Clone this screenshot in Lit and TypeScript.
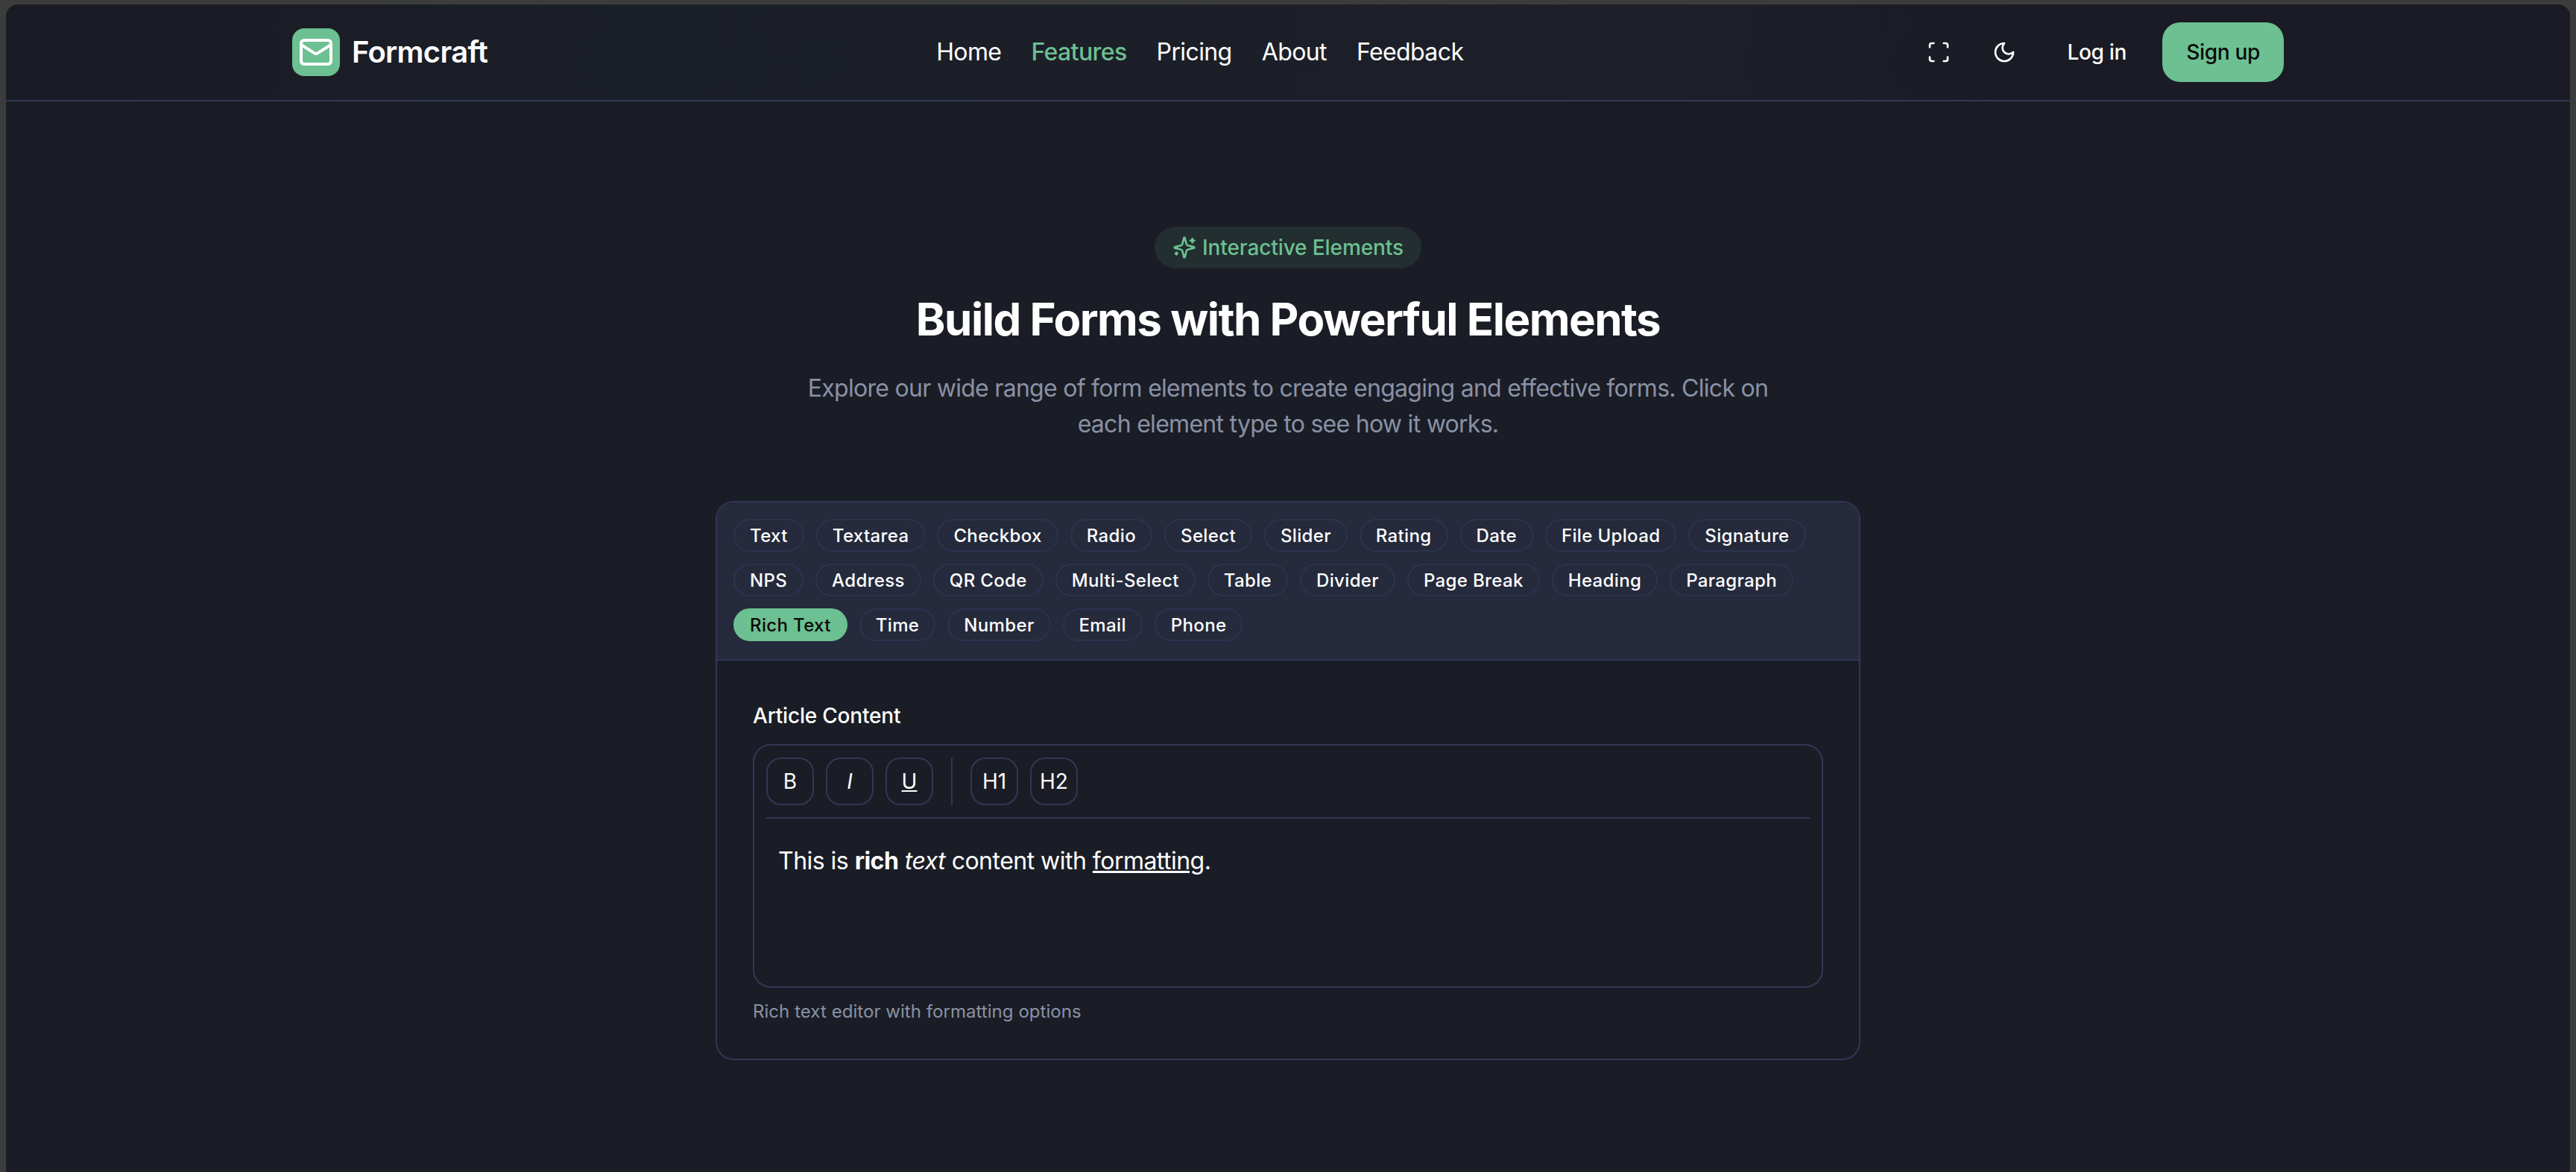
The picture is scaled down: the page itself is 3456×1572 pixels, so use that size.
import { LitElement, html, css, svg } from "lit";
import { customElement } from "lit/decorators.js";

const icon = (size: number, body: unknown, cls = "") => html`<svg class=${cls} width=${size} height=${size} viewBox="0 0 24 24" fill="none" stroke="currentColor" stroke-width="2" stroke-linecap="round" stroke-linejoin="round">${body}</svg>`;

const mail = svg`<rect x="2" y="4" width="20" height="16" rx="2"></rect><path d="m22 7-8.97 5.7a1.94 1.94 0 0 1-2.06 0L2 7"></path>`;
const scan = svg`<path d="M3 7V5a2 2 0 0 1 2-2h2"></path><path d="M17 3h2a2 2 0 0 1 2 2v2"></path><path d="M21 17v2a2 2 0 0 1-2 2h-2"></path><path d="M7 21H5a2 2 0 0 1-2-2v-2"></path>`;
const moon = svg`<path d="M12 3a6 6 0 0 0 9 9 9 9 0 1 1-9-9Z"></path>`;
const sparkles = svg`<path d="M9.937 15.5A2 2 0 0 0 8.5 14.063l-6.135-1.582a.5.5 0 0 1 0-.962L8.5 9.936A2 2 0 0 0 9.937 8.5l1.582-6.135a.5.5 0 0 1 .963 0L14.063 8.5A2 2 0 0 0 15.5 9.937l6.135 1.581a.5.5 0 0 1 0 .964L15.5 14.063a2 2 0 0 0-1.437 1.437l-1.582 6.135a.5.5 0 0 1-.963 0z"></path><path d="M20 3v4"></path><path d="M22 5h-4"></path><path d="M4 17v2"></path><path d="M5 18H3"></path>`;

const NAV = ["Home", "Features", "Pricing", "About", "Feedback"];
const CHIPS = ["Text","Textarea","Checkbox","Radio","Select","Slider","Rating","Date","File Upload","Signature","NPS","Address","QR Code","Multi-Select","Table","Divider","Page Break","Heading","Paragraph","Rich Text","Time","Number","Email","Phone"];

@customElement("app-root")
export class AppRoot extends LitElement {
  static styles = css`
    :host { display: block; height: 1572px; overflow: hidden; background: #3c3c3c; padding: 6px 8px 0; box-sizing: border-box; font-family: Inter, "Liberation Sans", sans-serif; color: #fff; --line: #323756; }
    * { box-sizing: border-box; }
    .window { height: 100%; background: #1a1d25; border-radius: 16px 16px 0 0; overflow: hidden; }
    .nav-bar { height: 130px; border-bottom: 2px solid var(--line); background: linear-gradient(90deg, #1a1c25 0%, #1b1f27 25%, #1c1f28 50%, #1d2029 65%, #1a1b24 80%, #1a1b24 100%); }
    .nav-in { max-width: 2800px; height: 128px; margin: 0 auto; padding: 0 64px; display: flex; align-items: center; justify-content: space-between; }
    .brand { display: flex; align-items: center; gap: 16px; }
    .logo { width: 64px; height: 64px; border-radius: 16px; background: #6cc091; display: flex; align-items: center; justify-content: center; color: #fff; }
    .brand-name { font-size: 40px; font-weight: 600; line-height: 56px; letter-spacing: -0.75px; }
    .links { display: flex; gap: 40px; font-size: 32px; line-height: 48px; letter-spacing: -0.6px; }
    .links a { color: #fff; }
    .links a.active { color: #6cc091; font-weight: 500; }
    .actions { display: flex; align-items: center; gap: 16px; }
    .icon-btn { width: 72px; height: 72px; display: flex; align-items: center; justify-content: center; color: #fff; }
    .login { height: 80px; padding: 0 32px; display: flex; align-items: center; font-size: 28px; font-weight: 500; letter-spacing: -0.3px; }
    .signup { height: 80px; padding: 0 32px; display: flex; align-items: center; font-size: 28px; font-weight: 500; letter-spacing: -0.3px; background: #6cc091; color: #0a0a0a; border-radius: 24px; }
    main { display: flex; flex-direction: column; align-items: center; padding-top: 168px; }
    .badge { height: 56px; padding: 0 24px; display: flex; align-items: center; gap: 8px; border-radius: 28px; background: rgba(108, 192, 145, 0.1); color: #6cc091; font-size: 28px; font-weight: 500; letter-spacing: -0.1px; }
    h1 { margin: 32px 0 0; font-size: 60px; line-height: 72px; font-weight: 700; letter-spacing: -1.5px; }
    .sub { margin: 33px 0 0; width: 1344px; text-align: center; font-size: 32px; line-height: 48px; color: #8a91a6; letter-spacing: -0.72px; }
    .card { width: 1536px; margin-top: 79px; border: 2px solid var(--line); border-radius: 24px; overflow: hidden; }
    .tabs { background: #252a3c; padding: 22px 22px 24px; display: flex; flex-wrap: wrap; gap: 16px; border-bottom: 2px solid var(--line); }
    .chip { height: 44px; padding: 1px 20px 0; display: flex; align-items: center; border: 2px solid #2e3350; border-radius: 22px; font-size: 24px; font-weight: 500; line-height: 32px; letter-spacing: 0.35px; }
    .chip.on { background: #6cc091; border-color: #6cc091; color: #0a0a0a; }
    .body { padding: 54px 48px 47px; }
    .label { font-size: 28px; line-height: 40px; font-weight: 500; margin-bottom: 18px; letter-spacing: -0.2px; }
    .editor { height: 327px; border: 2px solid var(--line); border-radius: 24px; padding: 16px; }
    .toolbar { display: flex; gap: 16px; padding-bottom: 16px; border-bottom: 2px solid var(--line); }
    .tb { width: 64px; height: 64px; border: 2px solid var(--line); border-radius: 20px; display: flex; align-items: center; justify-content: center; font-size: 28px; line-height: 40px; }
    .i { font-style: italic; }
    .u { text-decoration: underline; }
    .sep { width: 2px; height: 64px; margin: 0 8px; background: var(--line); }
    .content { padding: 33px 16px; font-size: 32px; line-height: 48px; letter-spacing: -0.52px; }
    .help { margin-top: 16px; font-size: 24px; line-height: 32px; color: #8a91a6; letter-spacing: 0.05px; }
  `;

  render() {
    return html`
      <div class="window">
        <header class="nav-bar">
          <div class="nav-in">
            <div class="brand">
              <div class="logo">${icon(48, mail)}</div>
              <span class="brand-name">Formcraft</span>
            </div>
            <nav class="links">
              ${NAV.map((n) => html`<a class=${n === "Features" ? "active" : ""}>${n}</a>`)}
            </nav>
            <div class="actions">
              <div class="icon-btn">${icon(32, scan)}</div>
              <div class="icon-btn">${icon(32, moon)}</div>
              <div class="login">Log in</div>
              <div class="signup">Sign up</div>
            </div>
          </div>
        </header>
        <main>
          <div class="badge">${icon(32, sparkles)}<span>Interactive Elements</span></div>
          <h1>Build Forms with Powerful Elements</h1>
          <p class="sub">Explore our wide range of form elements to create engaging and effective forms. Click on each element type to see how it works.</p>
          <section class="card">
            <div class="tabs">
              ${CHIPS.map((c) => html`<div class="chip ${c === "Rich Text" ? "on" : ""}">${c}</div>`)}
            </div>
            <div class="body">
              <div class="label">Article Content</div>
              <div class="editor">
                <div class="toolbar">
                  <div class="tb">B</div>
                  <div class="tb i">I</div>
                  <div class="tb u">U</div>
                  <div class="sep"></div>
                  <div class="tb">H1</div>
                  <div class="tb">H2</div>
                </div>
                <div class="content">This is <b>rich</b> <i>text</i> content with <u>formatting</u>.</div>
              </div>
              <div class="help">Rich text editor with formatting options</div>
            </div>
          </section>
        </main>
      </div>
    `;
  }
}
